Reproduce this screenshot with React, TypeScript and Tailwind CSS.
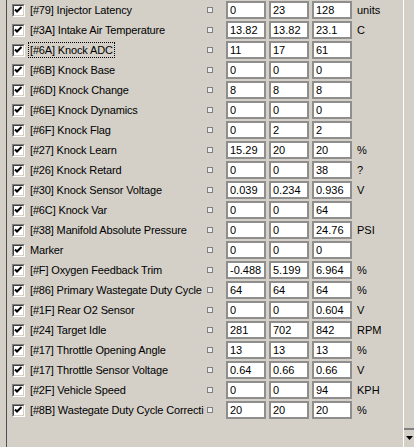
import React from "react"

type Row = {
  label: string
  a: string
  b: string
  c: string
  unit?: string
  focus?: boolean
}

const rows: Row[] = [
  { label: "[#79] Injector Latency", a: "0", b: "23", c: "128", unit: "units" },
  { label: "[#3A] Intake Air Temperature", a: "13.82", b: "13.82", c: "23.1", unit: "C" },
  { label: "[#6A] Knock ADC", a: "11", b: "17", c: "61", focus: true },
  { label: "[#6B] Knock Base", a: "0", b: "0", c: "0" },
  { label: "[#6D] Knock Change", a: "8", b: "8", c: "8" },
  { label: "[#6E] Knock Dynamics", a: "0", b: "0", c: "0" },
  { label: "[#6F] Knock Flag", a: "0", b: "2", c: "2" },
  { label: "[#27] Knock Learn", a: "15.29", b: "20", c: "20", unit: "%" },
  { label: "[#26] Knock Retard", a: "0", b: "0", c: "38", unit: "?" },
  { label: "[#30] Knock Sensor Voltage", a: "0.039", b: "0.234", c: "0.936", unit: "V" },
  { label: "[#6C] Knock Var", a: "0", b: "0", c: "64" },
  { label: "[#38] Manifold Absolute Pressure", a: "0", b: "0", c: "24.76", unit: "PSI" },
  { label: "Marker", a: "0", b: "0", c: "0" },
  { label: "[#F] Oxygen Feedback Trim", a: "-0.488", b: "5.199", c: "6.964", unit: "%" },
  { label: "[#86] Primary Wastegate Duty Cycle", a: "64", b: "64", c: "64", unit: "%" },
  { label: "[#1F] Rear O2 Sensor", a: "0", b: "0", c: "0.604", unit: "V" },
  { label: "[#24] Target Idle", a: "281", b: "702", c: "842", unit: "RPM" },
  { label: "[#17] Throttle Opening Angle", a: "13", b: "13", c: "13", unit: "%" },
  { label: "[#17] Throttle Sensor Voltage", a: "0.64", b: "0.66", c: "0.66", unit: "V" },
  { label: "[#2F] Vehicle Speed", a: "0", b: "0", c: "94", unit: "KPH" },
  { label: "[#8B] Wastegate Duty Cycle Correcti", a: "20", b: "20", c: "20", unit: "%" },
]

function CheckBox() {
  return (
    <div className="h-[13px] w-[13px] shrink-0 border border-t-[#808080] border-l-[#808080] border-b-white border-r-white">
      <div className="h-[11px] w-[11px] border border-t-[#404040] border-l-[#404040] border-b-[#d4d0c8] border-r-[#d4d0c8] bg-white">
        <svg width="9" height="9" viewBox="0 0 9 9" className="block">
          <path d="M1 3.5 L3 5.5 L7.5 1" fill="none" stroke="#000" strokeWidth="2" />
        </svg>
      </div>
    </div>
  )
}

function ValueBox({ value }: { value: string }) {
  return (
    <div className="h-[18px] w-[40px] shrink-0 border-2 border-[#8e8e8e] bg-white pl-[2px] leading-[14px]">
      {value}
    </div>
  )
}

export default function App() {
  return (
    <div className="flex h-[447px] w-[414px] overflow-hidden bg-[#d4d0c8] font-['Liberation_Sans',Arial,sans-serif] text-[11px] text-black">
      <div className="w-[7px] shrink-0 border-r border-[#505050]" />

      <div className="flex flex-1 flex-col">
        {rows.map((row, i) => (
          <div key={i} className="flex h-5 items-center">
            <div className="ml-[5px]">
              <CheckBox />
            </div>
            <div className="ml-[3px] w-[179px] shrink-0 whitespace-nowrap tracking-[-0.15px]">
              <span
                className={
                  row.focus
                    ? "inline-block border border-dotted border-black px-[1px] leading-[14px]"
                    : "inline-block border border-transparent px-[1px] leading-[14px]"
                }
              >
                {row.label}
              </span>
            </div>
            <div className="h-[6px] w-[6px] shrink-0 border border-[#808080] bg-[#ececec]" />
            <div className="ml-[13px] flex gap-[3px]">
              <ValueBox value={row.a} />
              <ValueBox value={row.b} />
              <ValueBox value={row.c} />
            </div>
            <span className="ml-[5px] whitespace-nowrap">{row.unit}</span>
          </div>
        ))}
      </div>

      <div className="flex w-[11px] shrink-0 flex-col justify-end border-l border-white">
        <div className="flex h-[19px] items-start justify-center border-t-2 border-[#808080] pt-[6px]">
          <svg width="7" height="4" viewBox="0 0 7 4" className="block">
            <path d="M0 0 H7 L3.5 4 Z" fill="#000" />
          </svg>
        </div>
      </div>
    </div>
  )
}
